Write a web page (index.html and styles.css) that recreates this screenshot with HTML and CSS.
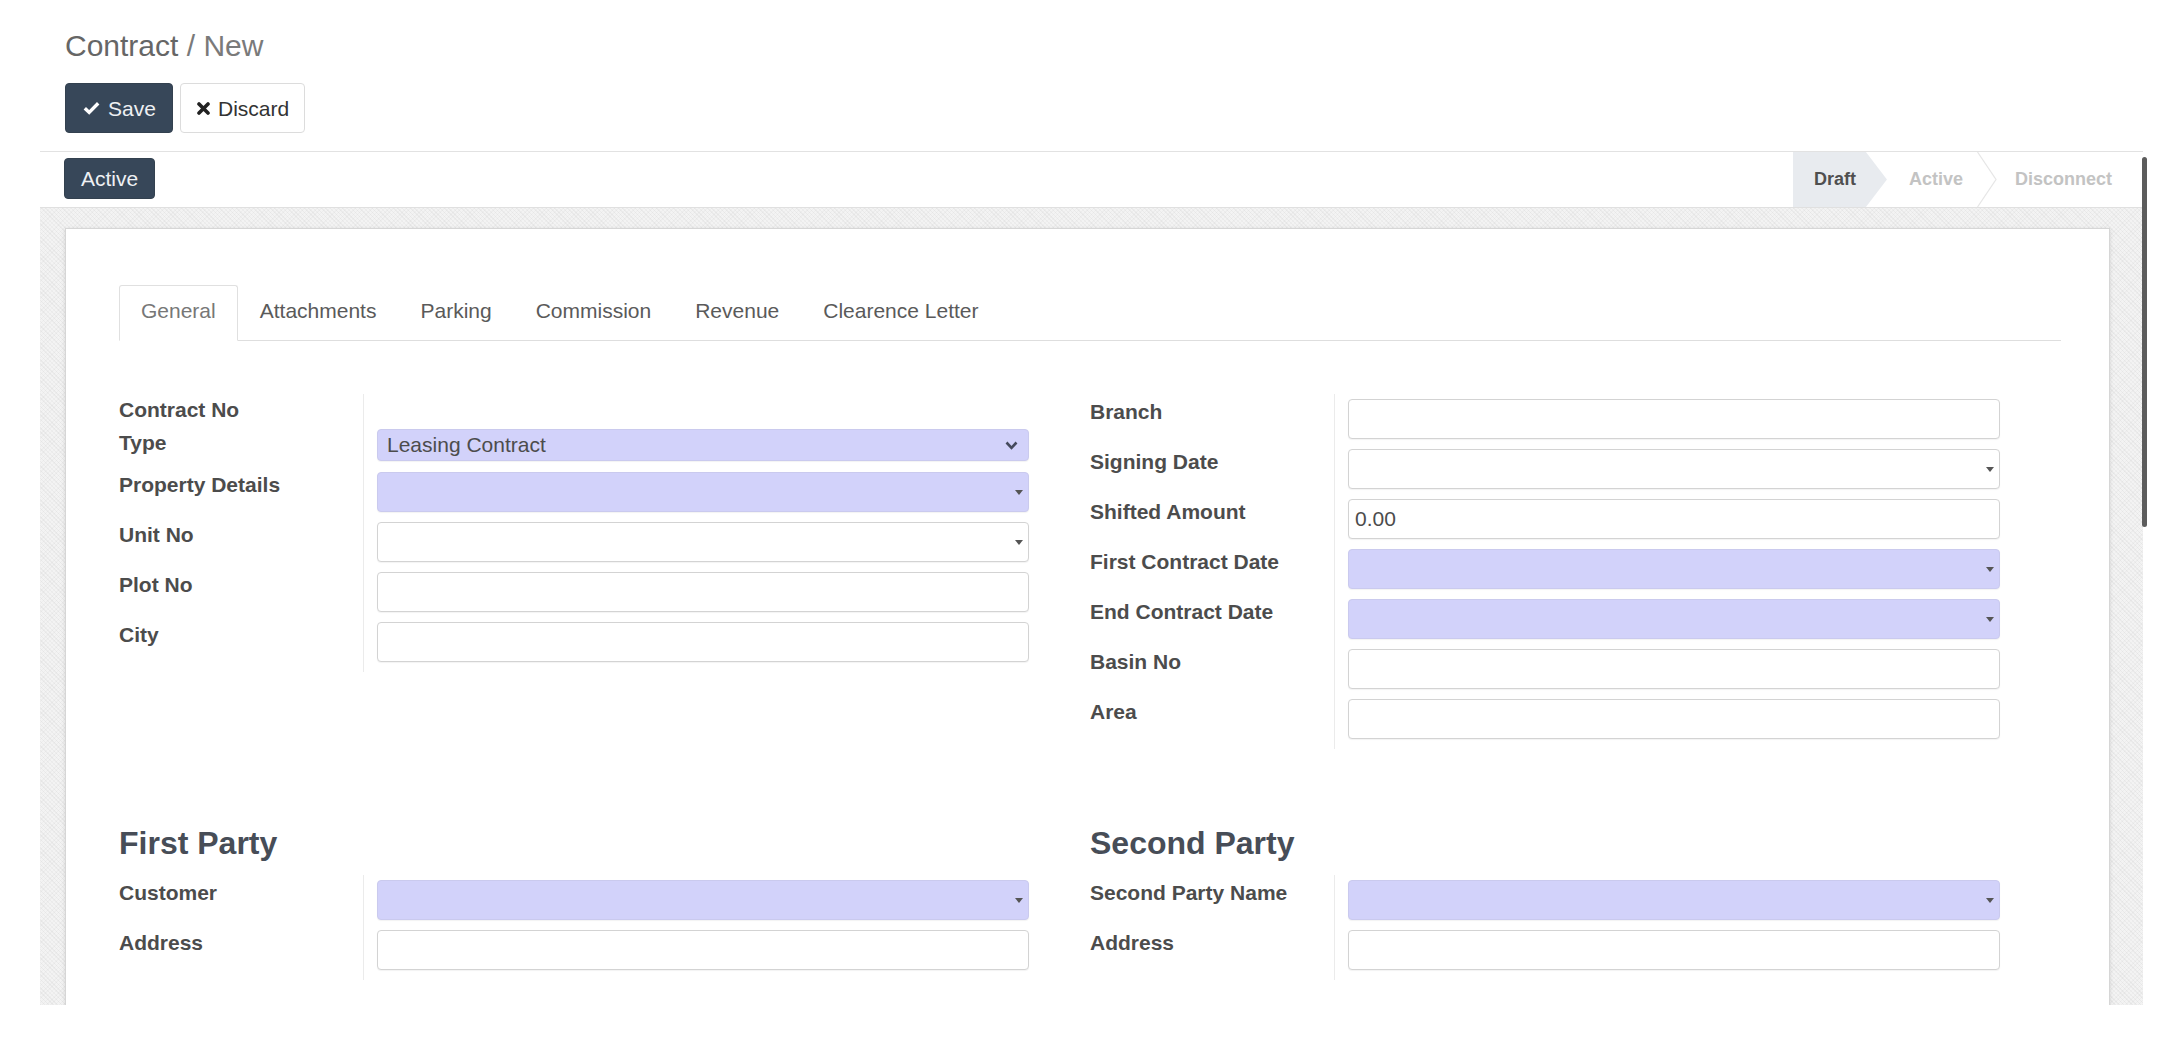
FILE: index.html
```html
<!DOCTYPE html>
<html lang="en">
<head>
<meta charset="utf-8">
<title>Contract / New</title>
<link rel="stylesheet" href="styles.css">
</head>
<body>
<div class="scroll-thumb"></div>
<div class="app">
  <div class="control-panel">
    <div class="breadcrumb"><span class="crumb">Contract</span><span class="crumb-sep"> / </span><span class="crumb-cur">New</span></div>
    <div class="cp-buttons">
      <button class="btn btn-primary btn-save">
        <svg class="ico" width="17" height="14" viewBox="0 0 17 14"><path d="M1.8 7.2 L6.2 11.4 L15.2 2.2" fill="none" stroke="#fff" stroke-width="3.4"/></svg>
        <span>Save</span>
      </button>
      <button class="btn btn-default btn-discard">
        <svg class="ico" width="13" height="13" viewBox="0 0 13 13"><path d="M2 2 L11 11 M11 2 L2 11" fill="none" stroke="#222" stroke-width="3.6" stroke-linecap="round"/></svg>
        <span>Discard</span>
      </button>
    </div>
  </div>

  <div class="form-view">
    <div class="statusbar">
      <button class="btn btn-primary btn-badge">Active</button>
      <div class="status">
        <div class="st st-current">Draft</div>
        <div class="st st-mid"><span>Active</span><svg class="st-arrow" width="20" height="55" viewBox="0 0 20 55"><polyline points="0.5,0 19,27.5 0.5,55" fill="none" stroke="#e6e6e6" stroke-width="1.2"/></svg></div>
        <div class="st st-last">Disconnect</div>
      </div>
    </div>

    <div class="sheet-bg">
      <div class="sheet">
        <ul class="tabs">
          <li class="tab active">General</li>
          <li class="tab">Attachments</li>
          <li class="tab">Parking</li>
          <li class="tab">Commission</li>
          <li class="tab">Revenue</li>
          <li class="tab">Clearence Letter</li>
        </ul>

        <div class="outer">
          <div class="col">
            <div class="group">
              <div class="lbl lbl-first">Contract No</div>
              <div class="fcell fcell-empty"></div>

              <div class="lbl">Type</div>
              <div class="fcell fcell-select">
                <div class="input required select"><span>Leasing Contract</span>
                  <svg class="chev" width="13" height="9" viewBox="0 0 13 9"><polyline points="1.5,1.5 6.5,6.8 11.5,1.5" fill="none" stroke="#454a5c" stroke-width="2.6"/></svg>
                </div>
              </div>

              <div class="lbl">Property Details</div>
              <div class="fcell"><div class="input required"><span class="caret"></span></div></div>

              <div class="lbl">Unit No</div>
              <div class="fcell"><div class="input"><span class="caret"></span></div></div>

              <div class="lbl">Plot No</div>
              <div class="fcell"><div class="input"></div></div>

              <div class="lbl">City</div>
              <div class="fcell"><div class="input"></div></div>
            </div>
          </div>

          <div class="col">
            <div class="group">
              <div class="lbl">Branch</div>
              <div class="fcell"><div class="input"></div></div>

              <div class="lbl">Signing Date</div>
              <div class="fcell"><div class="input"><span class="caret"></span></div></div>

              <div class="lbl">Shifted Amount</div>
              <div class="fcell"><div class="input"><span class="val">0.00</span></div></div>

              <div class="lbl">First Contract Date</div>
              <div class="fcell"><div class="input required"><span class="caret"></span></div></div>

              <div class="lbl">End Contract Date</div>
              <div class="fcell"><div class="input required"><span class="caret"></span></div></div>

              <div class="lbl">Basin No</div>
              <div class="fcell"><div class="input"></div></div>

              <div class="lbl">Area</div>
              <div class="fcell"><div class="input"></div></div>
            </div>
          </div>
        </div>

        <div class="outer outer-parties">
          <div class="col">
            <h2 class="sep-title">First Party</h2>
            <div class="group">
              <div class="lbl">Customer</div>
              <div class="fcell"><div class="input required"><span class="caret"></span></div></div>

              <div class="lbl">Address</div>
              <div class="fcell"><div class="input"></div></div>
            </div>
          </div>
          <div class="col">
            <h2 class="sep-title">Second Party</h2>
            <div class="group">
              <div class="lbl">Second Party Name</div>
              <div class="fcell"><div class="input required"><span class="caret"></span></div></div>

              <div class="lbl">Address</div>
              <div class="fcell"><div class="input"></div></div>
            </div>
          </div>
        </div>
      </div>
    </div>
  </div>
</div>
</body>
</html>
```

FILE: styles.css
```css
* { box-sizing: border-box; }

html, body {
  margin: 0;
  padding: 0;
  background: #ffffff;
}

body {
  position: relative;
  width: 2165px;
  height: 1051px;
  overflow: hidden;
  font-family: "Liberation Sans", Arial, Helvetica, sans-serif;
  font-size: 21px;
  color: #4c4c4c;
}

.scroll-thumb {
  position: absolute;
  left: 2142px;
  top: 157px;
  width: 5px;
  height: 370px;
  border-radius: 3px;
  background: #5c5c5c;
}

.app {
  margin-left: 40px;
  width: 2103px;
}

/* ---------- control panel ---------- */
.control-panel {
  height: 152px;
  padding: 28px 0 0 25px;
  border-bottom: 1px solid #e2e2e2;
}

.breadcrumb {
  font-size: 30px;
  line-height: 36px;
  color: #666;
}
.crumb { color: #666; }
.crumb-sep, .crumb-cur { color: #7a7a7a; }

.cp-buttons {
  display: flex;
  gap: 7px;
  margin-top: 19px;
}

.btn {
  display: inline-flex;
  align-items: center;
  gap: 8px;
  height: 50px;
  margin: 0;
  border-radius: 4px;
  font-family: inherit;
  font-size: 21px;
  line-height: 1;
  cursor: pointer;
}

.btn-primary {
  background: #374759;
  border: 1px solid #33414f;
  color: #eef0f3;
}

.btn-default {
  background: #fff;
  border: 1px solid #dcdcdc;
  color: #333;
}

.btn-save { width: 108px; padding: 0 0 0 17px; }
.btn-discard { width: 125px; padding: 0 0 0 16px; }

.ico { flex: none; }

/* ---------- status bar ---------- */
.statusbar {
  display: flex;
  align-items: center;
  height: 56px;
  padding: 0 5px 0 24px;
  border-bottom: 1px solid #e0e0e0;
}

.btn-badge {
  height: 41px;
  width: 91px;
  padding: 0;
  justify-content: center;
  margin-top: -2px;
}

.status {
  display: flex;
  align-self: stretch;
  margin-left: auto;
}

.st {
  display: flex;
  align-items: center;
  height: 55px;
  font-size: 18px;
  font-weight: bold;
  color: #c3c3c3;
}

.st-current {
  padding: 0 31px 0 21px;
  background: #e8ebef;
  color: #4f4f4f;
  clip-path: polygon(0 0, calc(100% - 21px) 0, 100% 50%, calc(100% - 21px) 100%, 0 100%);
}

.st-mid { padding-left: 22px; gap: 14px; }
.st-arrow { display: block; flex: none; }
.st-last { padding: 0 26px 0 18px; }

/* ---------- sheet ---------- */
.sheet-bg {
  height: 797px;
  overflow: hidden;
  padding: 20px 33px 0 25px;
  background-color: #f3f3f3;
  background-image:
    repeating-linear-gradient(45deg, rgba(0,0,0,0.035) 0 1px, transparent 1px 3px),
    repeating-linear-gradient(-45deg, rgba(0,0,0,0.025) 0 1px, transparent 1px 3px);
}

.sheet {
  min-height: 900px;
  background: #fff;
  border: 1px solid #d6d6d6;
  box-shadow: 0 1px 4px rgba(0,0,0,0.12);
  padding: 56px 48px 0 53px;
}

.tabs {
  display: flex;
  margin: 0;
  padding: 0;
  list-style: none;
  border-bottom: 1px solid #dedede;
}

.tab {
  padding: 10px 21px 14px;
  line-height: 30px;
  font-size: 21px;
  color: #5a5a5a;
  border: 1px solid transparent;
  border-radius: 3px 3px 0 0;
  margin-bottom: -1px;
}

.tab.active {
  color: #777;
  background: #fff;
  border-color: #e0e0e0 #e0e0e0 #fff;
}

.outer {
  display: grid;
  grid-template-columns: 1fr 1fr;
  align-items: start;
  margin-top: 53px;
}

.outer-parties { margin-top: 74px; }

.group {
  display: grid;
  grid-template-columns: 245px 1fr;
  padding-bottom: 5px;
  background: linear-gradient(#ebebeb, #ebebeb) no-repeat 244px 0 / 1px 100%;
}

.lbl {
  padding-top: 6px;
  font-weight: bold;
  line-height: 24px;
  color: #4c4c4c;
  white-space: nowrap;
}

.lbl-first { padding: 4px 0 3px; }

.fcell { padding: 5px 61px 5px 13px; }
.fcell-empty { padding: 0; }
.fcell-select { padding: 4px 61px 6px 13px; }

.input {
  display: flex;
  align-items: center;
  height: 40px;
  padding: 0 5px;
  background: #fff;
  border: 1px solid #d3d3d3;
  border-radius: 4px;
  box-shadow: 0 1px 1px rgba(0,0,0,0.05);
  color: #4c4c4c;
}

.input.required {
  background: #d2d2fa;
  border-color: #cacaee;
}

.input.select {
  height: 32px;
  padding: 0 10px 0 9px;
}

.val { padding-left: 1px; }

.chev { margin-left: auto; flex: none; }

.caret {
  margin-left: auto;
  width: 0;
  height: 0;
  border-left: 4px solid transparent;
  border-right: 4px solid transparent;
  border-top: 5px solid #555;
}

.sep-title {
  margin: 0 0 12px;
  font-size: 32px;
  line-height: 40px;
  font-weight: bold;
  color: #474d57;
}
```
